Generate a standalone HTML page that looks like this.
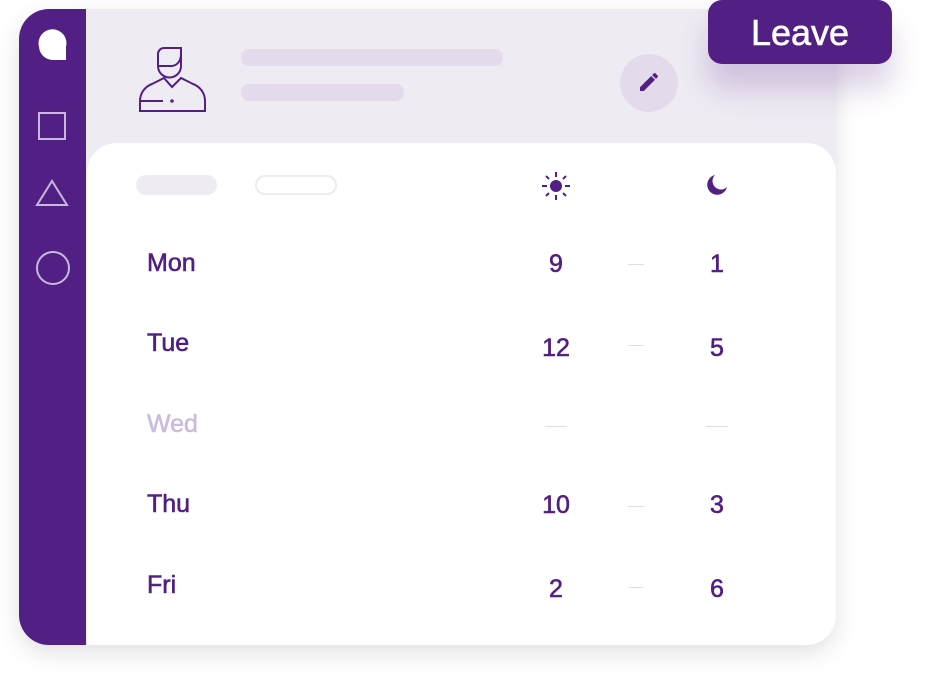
<!DOCTYPE html>
<html><head><style>
*{margin:0;padding:0;box-sizing:border-box}
body{width:941px;height:674px;background:#fff;position:relative;overflow:hidden;font-family:"Liberation Sans",sans-serif}
.card{position:absolute;left:19px;top:9px;width:817px;height:636px;border-radius:30px;background:#efebf3;overflow:hidden;box-shadow:0 8px 24px rgba(0,0,0,.12)}
.side{position:absolute;left:0;top:0;width:67px;height:100%;background:#521f84}
.main{position:absolute;left:68px;top:134px;width:749px;height:502px;background:#fff;border-radius:30px 30px 20px 0}
.bar{position:absolute;border-radius:8px;background:#e3dbec}
.t{position:absolute;color:#521f84;font-size:25px;-webkit-text-stroke:0.6px currentColor}
.c{transform:translateX(-50%)}
.d{position:absolute;height:1px;background:#e3dbec}
.leave{position:absolute;left:708px;top:0;width:184px;height:64px;background:#521f84;border-radius:14px;color:#fff;font-size:36px;text-align:center;line-height:66px;-webkit-text-stroke:0.6px #fff;box-shadow:0 25px 30px rgba(82,31,132,.2)}
</style></head><body>
<div class="card">
<div class="side">
<svg width="67" height="300" style="position:absolute;left:0;top:0" fill="none" stroke="#c9b8dc" stroke-width="2">
<path d="M20 38a14 14 0 1 1 27 0v13h-13a14 14 0 0 1-14-13z" fill="#fff" stroke="none"/>
<rect x="20" y="104" width="26" height="26"/>
<path d="M33 172 L48 196 L18 196 Z"/>
<circle cx="34" cy="259" r="16"/>
</svg>
</div>
<svg width="80" height="80" style="position:absolute;left:114px;top:28px" fill="none" stroke="#521f84" stroke-width="2">
<path d="M25 29v-12a6 6 0 0 1 6-6h17v18a11.5 11.5 0 0 1-23 0z"/><path d="M25 29h13c6 0 10-5 10-12"/>
<path d="M31 41l-12 6a18 18 0 0 0-12 17v10h65v-10a18 18 0 0 0-12-17l-12-6l-9 9z"/>
<path d="M7 64h23"/><circle cx="39" cy="64" r=".8"/>
</svg>
<div class="bar" style="left:222px;top:40px;width:262px;height:17px"></div>
<div class="bar" style="left:222px;top:75px;width:163px;height:17px"></div>
<div style="position:absolute;left:601px;top:45px;width:58px;height:58px;border-radius:50%;background:#e3dbec"></div>
<svg width="24" height="24" style="position:absolute;left:618px;top:61px" viewBox="0 0 24 24"><path d="M3 17.3V21h3.8L18 9.8 14.2 6zM20.7 7c.4-.4.4-1 0-1.4l-2.3-2.3c-.4-.4-1-.4-1.4 0l-1.8 1.8 3.8 3.8z" fill="#521f84"/></svg>
<div class="main">
<div class="bar" style="left:49px;top:32px;width:81px;height:20px;background:#efebf3;border-radius:10px"></div>
<div style="position:absolute;left:168px;top:32px;width:82px;height:20px;border:2px solid #efebf3;border-radius:10px"></div>
<svg width="32" height="32" style="position:absolute;left:453px;top:27px" viewBox="0 0 32 32" stroke="#521f84" stroke-width="2"><circle cx="16" cy="16" r="6" fill="#521f84" stroke="none"/><path d="M16 2v5M16 25v5M2 16h5M25 16h5M6 6l3 3M23 23l3 3M6 26l3-3M23 9l3-3"/></svg>
<svg width="24" height="24" style="position:absolute;left:618px;top:30px" viewBox="0 0 24 24"><path d="M10 2a10 10 0 1 0 12 12 8 8 0 0 1-12-12z" fill="#521f84"/></svg>
</div>
</div>
<div class="t" style="left:147px;top:249px">Mon</div>
<div class="t" style="left:147px;top:329px">Tue</div>
<div class="t" style="left:147px;top:410px;color:#cbbcdc">Wed</div>
<div class="t" style="left:147px;top:490px">Thu</div>
<div class="t" style="left:147px;top:571px">Fri</div>
<div class="t c" style="left:556px;top:250px">9</div><div class="t c" style="left:717px;top:250px">1</div>
<div class="t c" style="left:556px;top:334px">12</div><div class="t c" style="left:717px;top:334px">5</div>
<div class="t c" style="left:556px;top:491px">10</div><div class="t c" style="left:717px;top:491px">3</div>
<div class="t c" style="left:556px;top:575px">2</div><div class="t c" style="left:717px;top:575px">6</div>
<div class="d" style="left:628px;top:264px;width:16px"></div>
<div class="d" style="left:628px;top:345px;width:16px"></div>
<div class="d" style="left:545px;top:426px;width:22px"></div>
<div class="d" style="left:706px;top:426px;width:22px"></div>
<div class="d" style="left:628px;top:506px;width:16px"></div>
<div class="d" style="left:628px;top:587px;width:16px"></div>
<div class="leave">Leave</div>
</body></html>
